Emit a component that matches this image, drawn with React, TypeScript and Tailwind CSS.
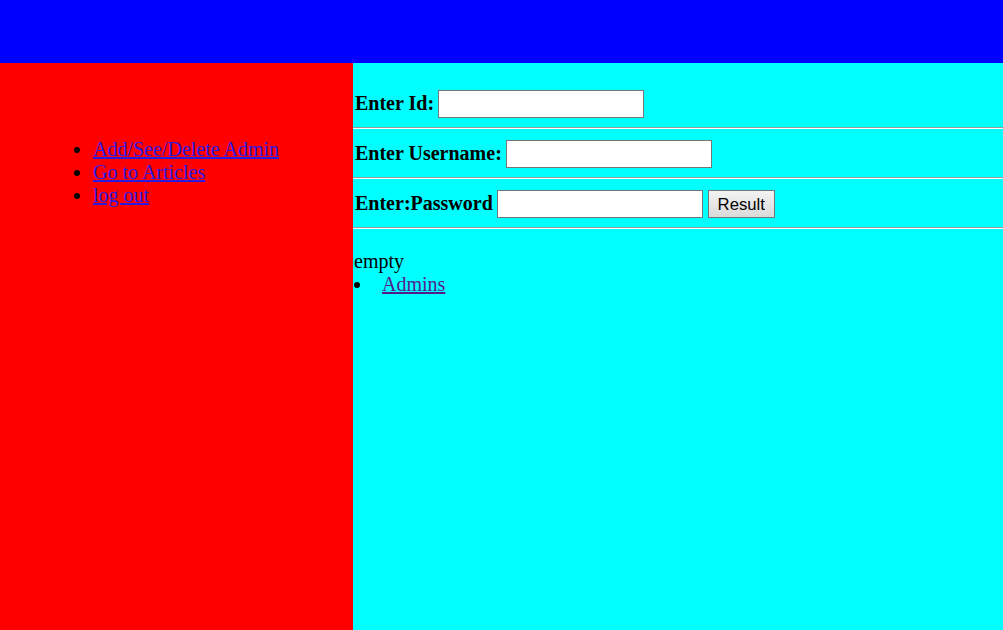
const Divider = () => <div className="h-[2px] border-t border-t-[#9a9a9a] border-b border-b-white" />;

const FieldRow = ({ label, button }: { label: string; button?: boolean }) => (
  <div className="flex items-center h-[28px] pl-[2px] gap-[4px]">
    <span className="font-bold -mt-[1px]">{label}</span>
    <input type="text" className="w-[206px] h-[28px] bg-white border border-[#767676] outline-none" />
    {button && (
      <button className="ml-[1px] w-[67px] h-[28px] border border-[#767676] bg-linear-to-b from-[#f3f3f3] to-[#dadada] text-[16.7px] text-black font-['Liberation_Sans',Arial,sans-serif]">
        Result
      </button>
    )}
  </div>
);

export default function App() {
  return (
    <div className="h-[630px] w-[1003px] flex flex-col font-['Liberation_Serif','Times_New_Roman',serif] text-[20px] leading-[23px] text-black overflow-hidden">
      <div className="h-[63px] bg-[#0000ff] shrink-0" />
      <div className="flex flex-1">
        <div className="w-[353px] bg-[#ff0000] shrink-0">
          <ul className="list-disc mt-[75px] pl-[93px]">
            <li><a href="#" className="underline text-[#2a1ae0]">Add/See/Delete Admin</a></li>
            <li><a href="#" className="underline text-[#2a1ae0]">Go to Articles</a></li>
            <li><a href="#" className="underline text-[#2a1ae0]">log out</a></li>
          </ul>
        </div>
        <div className="flex-1 bg-[#00ffff] pt-[27px]">
          <FieldRow label="Enter Id:" />
          <div className="mt-[9px] mb-[11px]"><Divider /></div>
          <FieldRow label="Enter Username:" />
          <div className="mt-[9px] mb-[11px]"><Divider /></div>
          <FieldRow label="Enter:Password" button />
          <div className="mt-[9px] mb-[21px]"><Divider /></div>
          <div className="pl-[1px]">empty</div>
          <div className="flex items-center">
            <span className="w-[29px] flex items-center pl-[1px]">
              <span className="block w-[6px] h-[6px] rounded-full bg-black mt-[1px]" />
            </span>
            <a href="#" className="underline text-[#551a8b]">Admins</a>
          </div>
        </div>
      </div>
    </div>
  );
}
